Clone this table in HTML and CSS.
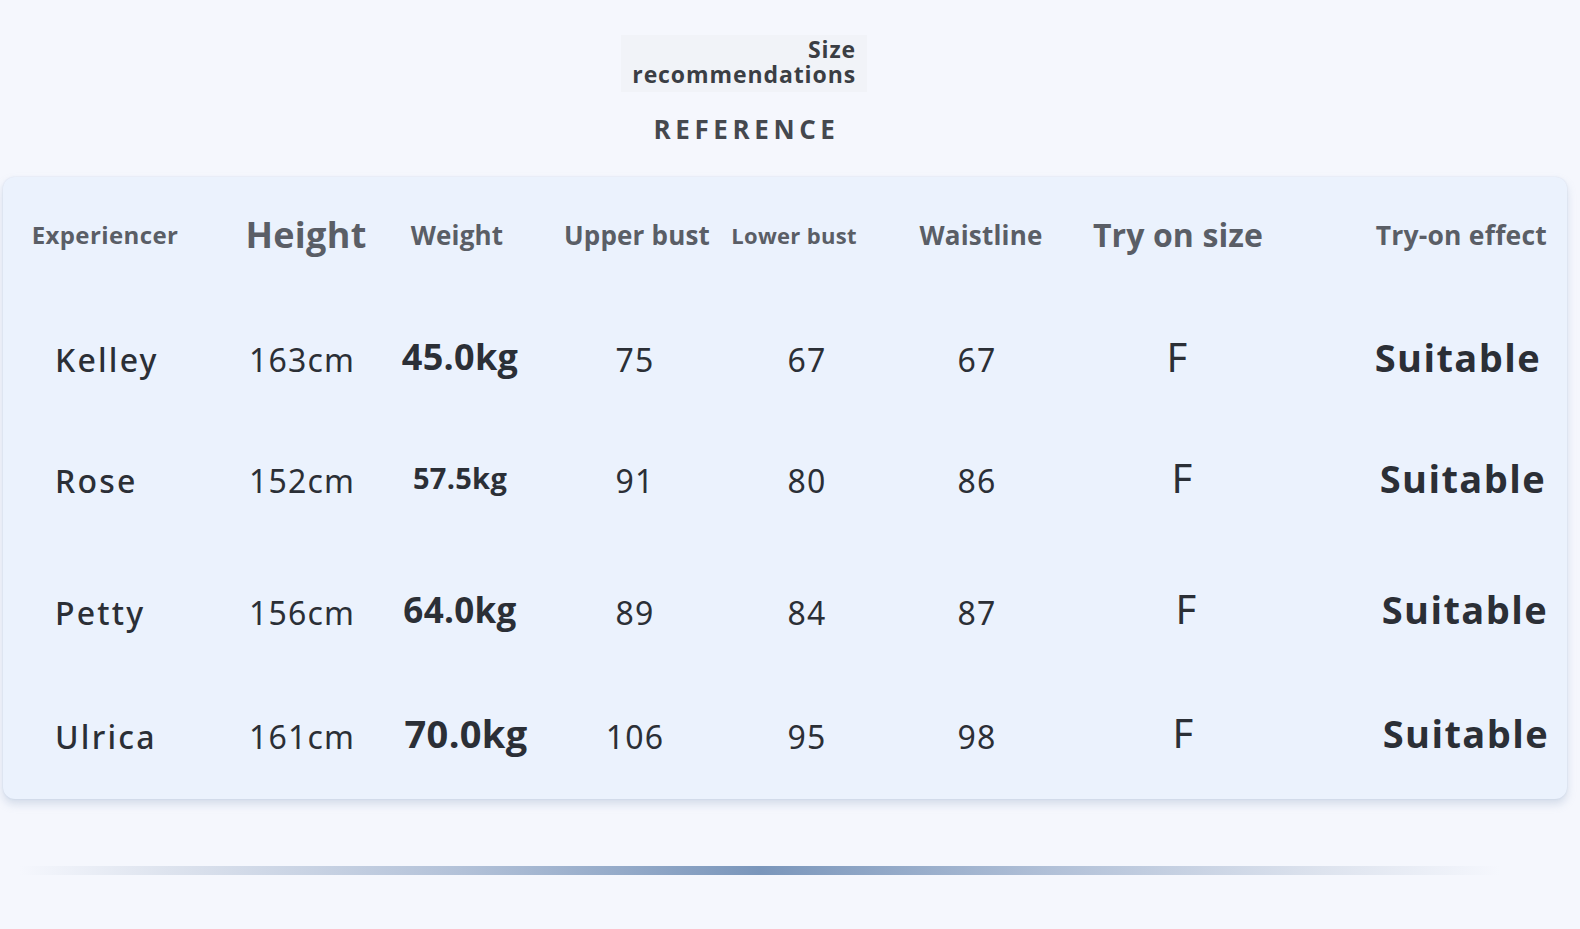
FILE: index.html
```html
<!DOCTYPE html>
<html lang="en">
<head>
<meta charset="utf-8">
<title>Size recommendations</title>
<link rel="stylesheet" href="styles.css">
</head>
<body>
<div class="page">
  <header class="top">
    <div class="title-box">
      <div class="title-line">Size</div>
      <div class="title-line">recommendations</div>
    </div>
    <div class="subtitle">REFERENCE</div>
  </header>

  <section class="card">
    <div class="thead">
      <div class="th">Experiencer</div>
      <div class="th th-lg">Height</div>
      <div class="th th-md">Weight</div>
      <div class="th th-md">Upper bust</div>
      <div class="th th-sm">Lower bust</div>
      <div class="th th-md">Waistline</div>
      <div class="th th-xl">Try on size</div>
      <div class="th th-end">Try-on effect</div>
    </div>

    <div class="row row-1">
      <div class="td name">Kelley</div>
      <div class="td">163cm</div>
      <div class="td kg kg-36">45.0kg</div>
      <div class="td">75</div>
      <div class="td">67</div>
      <div class="td">67</div>
      <div class="td size">F</div>
      <div class="td fit">Suitable</div>
    </div>

    <div class="row row-2">
      <div class="td name">Rose</div>
      <div class="td">152cm</div>
      <div class="td kg kg-29">57.5kg</div>
      <div class="td">91</div>
      <div class="td">80</div>
      <div class="td">86</div>
      <div class="td size">F</div>
      <div class="td fit">Suitable</div>
    </div>

    <div class="row row-3">
      <div class="td name">Petty</div>
      <div class="td">156cm</div>
      <div class="td kg kg-35">64.0kg</div>
      <div class="td">89</div>
      <div class="td">84</div>
      <div class="td">87</div>
      <div class="td size">F</div>
      <div class="td fit">Suitable</div>
    </div>

    <div class="row row-4">
      <div class="td name">Ulrica</div>
      <div class="td">161cm</div>
      <div class="td kg kg-38">70.0kg</div>
      <div class="td">106</div>
      <div class="td">95</div>
      <div class="td">98</div>
      <div class="td size">F</div>
      <div class="td fit">Suitable</div>
    </div>
  </section>

  <div class="divider"></div>
</div>
</body>
</html>
```

FILE: styles.css
```css
* { box-sizing: border-box; }

html, body {
  margin: 0;
  padding: 0;
  background: #f5f7fd;
}

body {
  width: 1580px;
  height: 929px;
  overflow: hidden;
  font-family: "Open Sans", "Noto Sans", sans-serif;
  color: #2b2f36;
}

.page {
  display: flex;
  flex-direction: column;
}

/* ---------- top titles ---------- */
.top {
  display: flex;
  flex-direction: column;
  align-items: center;
  padding-top: 35px;
  padding-right: 92px;
}

.title-box {
  width: 246px;
  height: 57px;
  padding: 2px 11px 0 0;
  background: #f1f3f8;
  text-align: right;
  font-weight: 700;
  font-size: 23px;
  line-height: 25px;
  letter-spacing: 0.9px;
  color: #3b3e44;
}

.subtitle {
  margin-top: 24px;
  height: 26px;
  line-height: 26px;
  font-size: 26px;
  font-weight: 700;
  letter-spacing: 4.6px;
  color: #45484e;
  padding-left: 5px;
}

/* ---------- card ---------- */
.card {
  margin: 35px 0 0 3px;
  width: 1564px;
  height: 622px;
  background: #ebf2fd;
  border-radius: 12px;
  box-shadow: 0 5px 8px rgba(150, 168, 198, 0.35), 0 0 2px rgba(170, 185, 215, 0.35);
  display: flex;
  flex-direction: column;
}

.thead {
  height: 122px;
  padding-bottom: 6px;
  display: grid;
  grid-template-columns: 204px 198px 104px 256px 58px 316px 78px 350px;
  align-items: center;
}

.th {
  display: flex;
  justify-content: center;
  white-space: nowrap;
  font-weight: 700;
  color: #5a5e66;
  font-size: 24px;
  letter-spacing: 0.4px;
  line-height: 1;
}

.th-sm { font-size: 22px; letter-spacing: 0.3px; }
.th-md { font-size: 26px; letter-spacing: 0.2px; }
.th-lg { font-size: 36px; letter-spacing: 0.3px; }
.th-xl { font-size: 32px; letter-spacing: 0.1px; }
.th-end {
  justify-content: flex-end;
  padding-right: 20px;
  font-size: 26.5px;
  letter-spacing: 0.2px;
}

.row {
  display: grid;
  grid-template-columns: 200px 198px 118px 232px 112px 228px 186px 290px;
  align-items: center;
}
.row-1 { height: 122px; }
.row-2 { height: 120px; }
.row-3 { height: 133px; padding-top: 10px; }
.row-4 { height: 125px; }

.td {
  display: flex;
  justify-content: center;
  white-space: nowrap;
  font-family: "Noto Sans", "Open Sans", sans-serif;
  font-size: 32px;
  line-height: 1;
  font-weight: 400;
  letter-spacing: 1.2px;
  color: #2b2f36;
}

.td.name {
  justify-content: flex-start;
  padding-left: 52px;
  font-weight: 500;
  letter-spacing: 2.2px;
}

.td.kg {
  font-family: "Open Sans", "Noto Sans", sans-serif;
  font-weight: 700;
  letter-spacing: 0.3px;
  padding-bottom: 7px;
}
.kg-36 { font-size: 36px; }
.kg-29 { font-size: 29px; }
.kg-35 { font-size: 35px; }
.kg-38 { font-size: 38px; padding-left: 12px; }

.td.size {
  font-size: 40px;
  font-weight: 400;
  letter-spacing: 0;
  padding-bottom: 7px;
}
.row-1 .size { padding-right: 14px; }
.row-2 .size { padding-right: 4px; }
.row-3 .size { padding-left: 4px; }
.row-4 .size { padding-right: 2px; }

.td.fit {
  justify-content: flex-end;
  padding-right: 22px;
  padding-bottom: 7px;
  font-family: "Open Sans", "Noto Sans", sans-serif;
  font-weight: 700;
  font-size: 38px;
  letter-spacing: 1.4px;
}
.row-1 .fit { padding-right: 26px; }
.row-2 .fit { padding-right: 21px; }
.row-3 .fit { padding-right: 19px; }
.row-4 .fit { padding-right: 18px; }

/* ---------- divider ---------- */
.divider {
  margin: 67px 0 0 20px;
  width: 1480px;
  height: 9px;
  background: linear-gradient(90deg,
    rgba(205, 214, 230, 0) 0%,
    #dde3ee 10%,
    #b2c1d8 30%,
    #7a96bb 50%,
    #b2c1d8 70%,
    #dde3ee 88%,
    rgba(205, 214, 230, 0) 100%);
}
```
